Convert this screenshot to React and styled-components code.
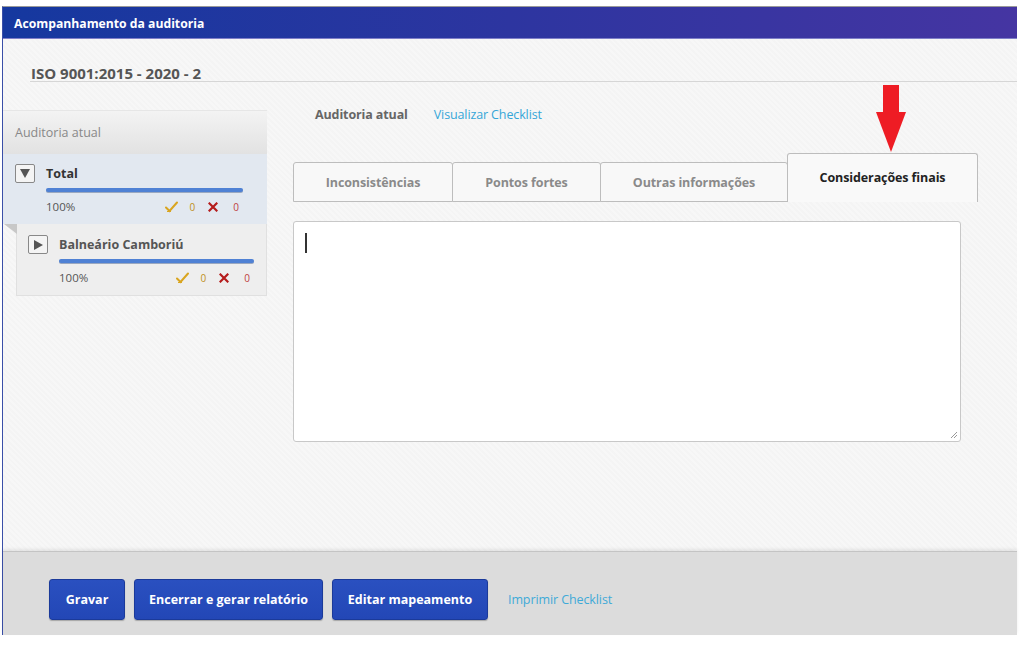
import React from "react";
import styled, { createGlobalStyle } from "styled-components";

const Global = createGlobalStyle`
  html, body { margin: 0; padding: 0; background: #fff; }
  body { font-family: "Open Sans", "Noto Sans", sans-serif; }
  * { box-sizing: border-box; }
`;

const Page = styled.div`
  width: 1024px;
  height: 647px;
  padding: 6px 0 0 2px;
`;

const Window = styled.div`
  width: 1015px;
  height: 629px;
  display: flex;
  flex-direction: column;
  border-top: 1px solid #9a9a9a;
  border-left: 1px solid #3a4fa8;
  background: #f7f7f7;
`;

const Header = styled.div`
  height: 32px;
  flex-shrink: 0;
  display: flex;
  align-items: center;
  padding: 2px 0 0 11px;
  background: linear-gradient(90deg, #15389f 0%, #2d35a0 50%, #4535a2 100%);
  border-bottom: 1px solid #7f7fc8;
  color: #fff;
  font-weight: 700;
  font-size: 12.2px;
`;

const Body = styled.div`
  flex: 1;
  display: flex;
  flex-direction: column;
  background-color: #f7f7f7;
  background-image: repeating-linear-gradient(45deg, rgba(0,0,0,0.012) 0 2px, transparent 2px 4px);
`;

const TitleBar = styled.div`
  margin-left: 27px;
  padding: 26px 0 0 1px;
  line-height: 16px;
  height: 43px;
  border-bottom: 1px solid #d6d6d6;
  font-size: 15px;
  font-weight: 700;
  color: #555;
`;

const Content = styled.div`
  display: flex;
  gap: 26px;
  padding-top: 23px;
`;

const Sidebar = styled.div`
  width: 264px;
  flex-shrink: 0;
  margin-top: 5px;
  display: flex;
  flex-direction: column;
`;

const SideHead = styled.div`
  height: 44px;
  display: flex;
  align-items: center;
  padding-left: 12px;
  background: linear-gradient(180deg, #f3f3f3 0%, #e2e2e2 100%);
  border-top: 1px solid #e6e6e6;
  font-size: 12.5px;
  color: #888;
`;

const Node = styled.div`
  position: relative;
  margin-left: ${p => p.$indent}px;
  height: ${p => p.$h}px;
  padding: ${p => p.$pt}px ${p => p.$pr}px 0 ${p => p.$pl}px;
  background: ${p => p.$bg};
  border: ${p => p.$border ? "1px solid #e0e0e0" : "none"};
  border-top: none;
  display: grid;
  grid-template-columns: 20px 1fr;
  column-gap: ${p => p.$gap}px;
  align-content: start;
`;

const Fold = styled.div`
  position: absolute;
  left: -13px;
  top: 0;
  width: 0;
  height: 0;
  border-top: 10px solid #c8c8c8;
  border-left: 13px solid transparent;
`;

const Toggle = styled.div`
  width: 20px;
  height: 19px;
  border: 1px solid #888;
  border-radius: 2px;
  display: flex;
  align-items: center;
  justify-content: center;
  background: #f4f4f4;
`;

const NodeInfo = styled.div`
  display: flex;
  flex-direction: column;
`;

const NodeTitle = styled.div`
  font-size: 12.5px;
  font-weight: 700;
  color: ${p => p.$color};
  line-height: 19px;
`;

const Bar = styled.div`
  height: 4px;
  margin-top: 5px;
  border-radius: 2px;
  background: #4f81d4;
  box-shadow: 0 1px 0 #9aa8c0;
`;

const Stats = styled.div`
  display: flex;
  align-items: center;
  margin-top: 7px;
  font-size: 11.5px;
  color: #555;
  padding-right: 4px;
`;

const Pct = styled.span`
  flex: 1;
`;

const StatNum = styled.span`
  font-size: 10px;
  color: ${p => p.$color};
  margin: 0 ${p => p.$mr}px 0 ${p => p.$ml}px;
`;

const Main = styled.div`
  flex: 1;
  display: flex;
  flex-direction: column;
`;

const TopLinks = styled.div`
  display: flex;
  gap: 26px;
  padding-left: 22px;
  height: 18px;
  align-items: center;
  font-size: 12.5px;
  letter-spacing: -0.12px;
  position: relative;
`;

const Label = styled.span`
  font-weight: 700;
  color: #666;
`;

const Link = styled.a`
  color: #35a6d8;
  text-decoration: none;
`;

const ArrowWrap = styled.div`
  position: absolute;
  left: 583px;
  top: -20px;
  line-height: 0;
`;

const Tabs = styled.div`
  display: flex;
  align-items: flex-end;
  margin-top: 30px;
  height: 49px;
`;

const Tab = styled.div`
  width: ${p => p.$w}px;
  height: ${p => p.$active ? 49 : 40}px;
  display: flex;
  align-items: center;
  justify-content: center;
  padding-bottom: ${p => p.$active ? 2 : 0}px;
  font-size: 12.5px;
  font-weight: 700;
  letter-spacing: -0.1px;
  color: ${p => p.$active ? "#222" : "#8a8a8a"};
  background: ${p => p.$active ? "#f9f9f9" : "#f8f8f8"};
  border: 1px solid #bdbdbd;
  border-bottom: ${p => p.$active ? "none" : "1px solid #bdbdbd"};
  border-radius: 3px 3px 0 0;
  margin-left: -1px;
  &:first-child { margin-left: 0; }
`;

const TextArea = styled.div`
  position: relative;
  margin-top: 19px;
  width: 668px;
  height: 221px;
  background: #fff;
  border: 1px solid #c8c8c8;
  border-radius: 3px;
  padding: 11px 11px;
`;

const Caret = styled.div`
  width: 2px;
  height: 20px;
  background: #333;
`;

const Grip = styled.svg`
  position: absolute;
  right: 2px;
  bottom: 2px;
`;

const Footer = styled.div`
  height: 84px;
  display: flex;
  align-items: flex-start;
  gap: 9px;
  padding: 27px 0 0 46px;
  margin-top: auto;
  background: #dcdcdc;
  border-top: 1px solid #c4c4c4;
  box-shadow: 0 -2px 3px rgba(0,0,0,0.08);
`;

const Button = styled.button`
  width: ${p => p.$w}px;
  height: 41px;
  padding: 0;
  border: 1px solid #1b3a9a;
  border-radius: 3px;
  background: linear-gradient(180deg, #2a50c0 0%, #2347b6 100%);
  box-shadow: 0 1px 1px rgba(0,0,0,0.25);
  color: #fff;
  font-family: inherit;
  font-size: 12.5px;
  font-weight: 700;
  cursor: pointer;
`;

const FooterLink = styled.a`
  margin-left: 11px;
  line-height: 41px;
  color: #3faad8;
  font-size: 12.5px;
  letter-spacing: -0.1px;
  text-decoration: none;
`;

const Check = ({ color }) => (
  <svg width="13" height="12" viewBox="0 0 13 12">
    <path d="M1 6.5 L4.5 10 L12 1.5" stroke={color} strokeWidth="2" fill="none" strokeLinecap="round" />
    <path d="M2 10.5 L6 10.5" stroke={color} strokeWidth="1" fill="none" />
  </svg>
);

const Cross = () => (
  <svg width="10" height="10" viewBox="0 0 10 10">
    <path d="M1.5 1.5 L8.5 8.5 M8.5 1.5 L1.5 8.5" stroke="#b51c1c" strokeWidth="2.2" strokeLinecap="square" />
  </svg>
);

const Down = () => (
  <svg width="10" height="9" viewBox="0 0 10 9"><path d="M0 0 H10 L5 9 Z" fill="#555" /></svg>
);
const Right = () => (
  <svg width="9" height="10" viewBox="0 0 9 10"><path d="M0 0 V10 L9 5 Z" fill="#555" /></svg>
);

const StatRow = () => (
  <Stats>
    <Pct>100%</Pct>
    <Check color="#d9a520" />
    <StatNum $color="#c09020" $ml={12} $mr={13}>0</StatNum>
    <Cross />
    <StatNum $color="#c04040" $ml={15} $mr={0}>0</StatNum>
  </Stats>
);

export default function App() {
  return (
    <Page>
      <Global />
      <Window>
        <Header>Acompanhamento da auditoria</Header>
        <Body>
          <TitleBar>ISO 9001:2015 - 2020 - 2</TitleBar>
          <Content>
            <Sidebar>
              <SideHead>Auditoria atual</SideHead>
              <Node $indent={0} $h={70} $pt={10} $pl={12} $pr={24} $gap={11} $bg="#e2e8f0">
                <Toggle><Down /></Toggle>
                <NodeInfo>
                  <NodeTitle $color="#333">Total</NodeTitle>
                  <Bar />
                  <StatRow />
                </NodeInfo>
              </Node>
              <Node $indent={13} $h={72} $pt={11} $pl={11} $pr={12} $gap={11} $bg="#eeeeee" $border>
                <Fold />
                <Toggle><Right /></Toggle>
                <NodeInfo>
                  <NodeTitle $color="#555">Balneário Camboriú</NodeTitle>
                  <Bar />
                  <StatRow />
                </NodeInfo>
              </Node>
            </Sidebar>
            <Main>
              <TopLinks>
                <Label>Auditoria atual</Label>
                <Link>Visualizar Checklist</Link>
                <ArrowWrap>
                  <svg width="30" height="67" viewBox="0 0 30 67">
                    <rect x="7" y="0" width="16" height="28" fill="#ee1c24" />
                    <path d="M0 27 H30 L15 67 Z" fill="#ee1c24" />
                  </svg>
                </ArrowWrap>
              </TopLinks>
              <Tabs>
                <Tab $w={160}>Inconsistências</Tab>
                <Tab $w={149}>Pontos fortes</Tab>
                <Tab $w={188}>Outras informações</Tab>
                <Tab $w={191} $active>Considerações finais</Tab>
              </Tabs>
              <TextArea>
                <Caret />
                <Grip width="9" height="9" viewBox="0 0 9 9">
                  <path d="M8 2 L2 8 M8 5 L5 8" stroke="#999" strokeWidth="1" />
                </Grip>
              </TextArea>
            </Main>
          </Content>
          <Footer>
            <Button $w={76}>Gravar</Button>
            <Button $w={189}>Encerrar e gerar relatório</Button>
            <Button $w={156}>Editar mapeamento</Button>
            <FooterLink>Imprimir Checklist</FooterLink>
          </Footer>
        </Body>
      </Window>
    </Page>
  );
}
